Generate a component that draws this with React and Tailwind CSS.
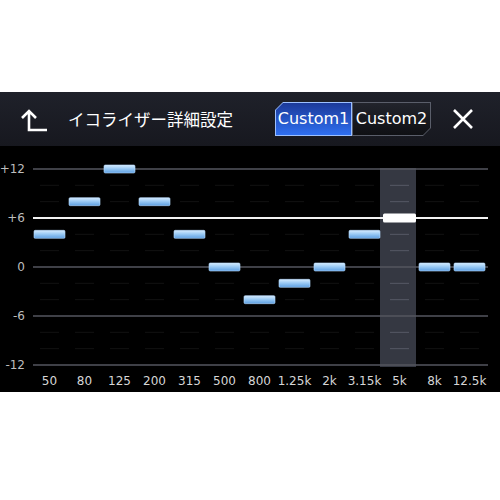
import React from "react";

// Equalizer detail screen: bands with their gain in dB.
const bands = [
  ["50", 4],
  ["80", 8],
  ["125", 12],
  ["200", 8],
  ["315", 4],
  ["500", 0],
  ["800", -4],
  ["1.25k", -2],
  ["2k", 0],
  ["3.15k", 4],
  ["5k", 6],
  ["8k", 0],
  ["12.5k", 0],
];
const selected = 10;

const yOf = (db) => 121 - (db * 49) / 6;
const minorSteps = [10, 8, 4, 2, -2, -4, -8, -10];

const Chart = () => (
  <svg width="467" height="222" viewBox="0 0 467 222">
    <defs>
      <linearGradient id="bar" x1="0" y1="0" x2="0" y2="1">
        <stop offset="0" stopColor="#d6ecff" />
        <stop offset="0.45" stopColor="#9ccbf5" />
        <stop offset="1" stopColor="#5d9fe2" />
      </linearGradient>
    </defs>
    <rect x="347" y="22" width="36" height="199" fill="#353842" />
    {bands.map((_, i) =>
      minorSteps.map((db) => (
        <line
          key={`${i}-${db}`}
          x1={1 + 35 * i + 6}
          x2={1 + 35 * i + 25}
          y1={yOf(db)}
          y2={yOf(db)}
          stroke={i === selected ? "#565a65" : "#121212"}
          strokeWidth="1"
        />
      ))
    )}
    {[12, 0, -6, -12].map((db) => (
      <line key={db} x1="0" x2="455" y1={yOf(db)} y2={yOf(db)} stroke="#55565f" strokeWidth="1.5" />
    ))}
    <line x1="0" x2="455" y1={yOf(6)} y2={yOf(6)} stroke="#f2f2f2" strokeWidth="2" />
    {bands.map(([label, db], i) =>
      i === selected ? (
        <rect key={label} x={350} y={yOf(db) - 4.5} width="33" height="9" rx="1.5" fill="#ffffff" />
      ) : (
        <rect
          key={label}
          x={1 + 35 * i}
          y={yOf(db) - 4}
          width="31"
          height="8"
          rx="1.2"
          fill="url(#bar)"
          stroke="#b9dcff"
          strokeWidth="0.6"
        />
      )
    )}
  </svg>
);

const App = () => {
  return (
    <div className="w-[500px] h-[500px] bg-white pt-[92px]">
      <div className="h-[300px] bg-black flex flex-col">
        {/* Header */}
        <div className="h-[54px] bg-gradient-to-b from-[#1f212a] to-[#17181f] flex items-center pl-[20px] pr-[26px]">
          <svg width="30" height="30" viewBox="0 0 30 30" fill="none">
            <path d="M2 14 L9 7 L16 14 M9 7 V26 H27" stroke="#ffffff" strokeWidth="2.6" strokeLinejoin="miter" />
          </svg>
          <span
            className="ml-[18px] text-white text-[16.5px] leading-none"
            style={{ fontFamily: '"Noto Sans CJK JP", "Noto Sans", sans-serif' }}
          >
            イコライザー詳細設定
          </span>
          <div className="flex-1" />
          <div className="flex font-['DejaVu_Sans',sans-serif] text-[16px] text-white">
            <div className="w-[77px] h-[34px] p-[1px] bg-[#9cc0ff] [clip-path:polygon(8px_0,100%_0,100%_100%,0_100%,0_8px)]">
              <div className="w-full h-full flex items-center justify-center bg-gradient-to-b from-[#1c3a9a] to-[#2f6ff0] [clip-path:polygon(7px_0,100%_0,100%_100%,0_100%,0_7px)]">
                Custom1
              </div>
            </div>
            <div className="w-[79px] h-[34px] p-[1px] bg-[#5a5e6a] [clip-path:polygon(0_0,100%_0,100%_calc(100%_-_8px),calc(100%_-_8px)_100%,0_100%)]">
              <div className="w-full h-full flex items-center justify-center bg-gradient-to-b from-[#22242c] to-[#0f1014] [clip-path:polygon(0_0,100%_0,100%_calc(100%_-_7px),calc(100%_-_7px)_100%,0_100%)]">
                Custom2
              </div>
            </div>
          </div>
          <svg className="ml-[21px]" width="22" height="22" viewBox="0 0 22 22" fill="none">
            <path d="M2 2 L20 20 M20 2 L2 20" stroke="#ffffff" strokeWidth="2.6" />
          </svg>
        </div>

        {/* Graph */}
        <div className="flex flex-col font-['DejaVu_Sans',sans-serif]">
          <div className="flex">
            <div className="w-[33px] flex flex-col items-end pr-[8px] pt-[16px] gap-[35px] text-[12px] leading-[14px] text-[#bdbdbd]">
              <span>+12</span>
              <span>+6</span>
              <span>0</span>
              <span>-6</span>
              <span>-12</span>
            </div>
            <Chart />
          </div>
          <div className="pl-[32px] grid grid-cols-[repeat(13,35px)] h-[18px] text-[12px] leading-[18px] text-[#d6d6d6]">
            {bands.map(([label]) => (
              <span key={label} className="text-center whitespace-nowrap">
                {label}
              </span>
            ))}
          </div>
        </div>
      </div>
    </div>
  );
};

export default App;
